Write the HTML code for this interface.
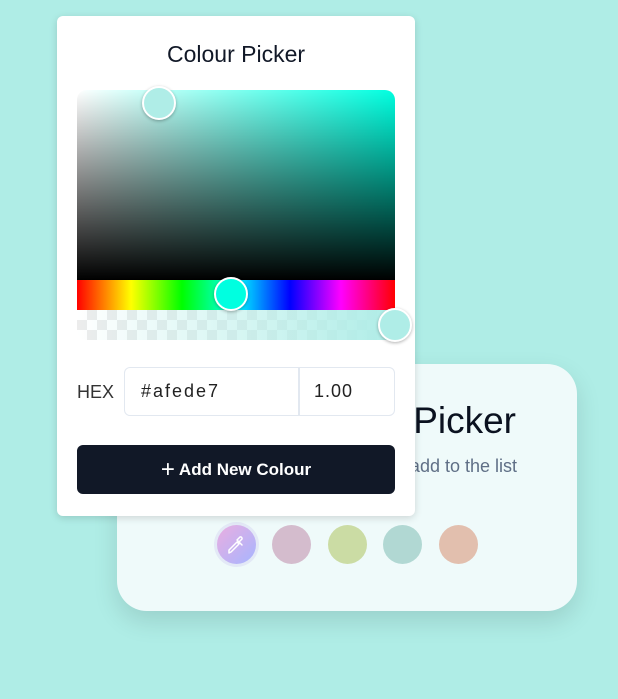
<!DOCTYPE html>
<html><head><style>
*{box-sizing:border-box;margin:0;padding:0}
body{width:618px;height:699px;background:#afede6;font-family:"Liberation Sans",sans-serif;position:relative;overflow:hidden}
.back{position:absolute;left:117px;top:364px;width:460px;height:247px;background:#effafa;border-radius:30px;box-shadow:0 10px 25px rgba(0,0,0,.12)}
.pick{position:absolute;right:102px;top:400px;font-size:37px;color:#0b1220;white-space:nowrap}
.sub{position:absolute;right:101px;top:456px;font-size:18px;color:#5f6f86;white-space:nowrap}
.c{position:absolute;top:525px;width:39px;height:39px;border-radius:50%}
.pop{position:absolute;left:57px;top:16px;width:358px;height:500px;background:#fff;border-radius:6px;box-shadow:0 2px 8px rgba(0,0,0,.15)}
.title{position:absolute;left:0;width:358px;top:25px;text-align:center;font-size:23px;color:#111827}
.sat{position:absolute;left:20px;top:74px;width:318px;height:190px;border-radius:10px 10px 0 0;background:linear-gradient(to top,#000,transparent),linear-gradient(to right,#fff,#00ffe0)}
.hue{position:absolute;left:20px;top:264px;width:318px;height:30px;background:linear-gradient(to right,#f00,#ff0 17%,#0f0 33%,#0ff 50%,#00f 67%,#f0f 83%,#f00)}
.alpha{position:absolute;left:20px;top:294px;width:318px;height:30px;border-radius:0 0 10px 10px;overflow:hidden;background-color:#fff;background-image:linear-gradient(45deg,#ececec 25%,transparent 25%,transparent 75%,#ececec 75%),linear-gradient(45deg,#ececec 25%,transparent 25%,transparent 75%,#ececec 75%);background-size:20px 20px;background-position:0 0,10px 10px}
.alpha:after{content:"";position:absolute;inset:0;background:linear-gradient(to right,rgba(175,237,231,0),#afede7)}
.th{position:absolute;width:34px;height:34px;border-radius:50%;border:2px solid #fff;box-shadow:0 1px 3px rgba(0,0,0,.3)}
.hex{position:absolute;left:20px;top:366px;font-size:18px;color:#333}
.inp{position:absolute;left:67px;top:351px;width:271px;height:49px;border:1px solid #e2e8f0;border-radius:6px;display:flex}
.inp div{font-size:18px;color:#222;line-height:47px}
.btn{position:absolute;left:20px;top:429px;width:318px;height:49px;background:#111827;border-radius:6px;color:#fff;font-weight:bold;font-size:17px;text-align:center;line-height:49px}
</style></head><body>
<div class="back"></div>
<div class="pick">Colour Picker</div>
<div class="sub">Pick a colour to add to the list</div>
<div class="c" style="left:214px;top:522px;width:45px;height:45px;background:#e3e9f6"></div>
<div class="c" style="left:217px;background:linear-gradient(135deg,#eaaee0,#a6b5ff)"><svg width="39" height="39" viewBox="0 0 39 39" fill="none" stroke="#fff" stroke-width="1.5" stroke-linejoin="round" stroke-linecap="round"><path d="M12 28l2-1 8-8-2-2-8 8z M20 15l5 5 M22 17l3-3a1.6 1.6 0 0 0-2-2l-3 3"/></svg></div>
<div class="c" style="left:272px;background:#d4bccd"></div>
<div class="c" style="left:328px;background:#cbdca4"></div>
<div class="c" style="left:383px;background:#b1d8d3"></div>
<div class="c" style="left:439px;background:#e2bfae"></div>
<div class="pop">
<div class="title">Colour Picker</div>
<div class="sat"></div><div class="hue"></div><div class="alpha"></div>
<div class="th" style="left:85px;top:70px;background:#afede7"></div>
<div class="th" style="left:157px;top:261px;background:#00ffe0"></div>
<div class="th" style="left:321px;top:292px;background:#afede7"></div>
<div class="hex">HEX</div>
<div class="inp"><div style="width:175px;border-right:2px solid #e2e8f0;padding-left:16px;letter-spacing:2px">#afede7</div><div style="padding-left:14px;letter-spacing:1px">1.00</div></div>
<div class="btn"><span style="font-weight:normal;font-size:24px;vertical-align:-2px">+</span> Add New Colour</div>
</div>
</body></html>
